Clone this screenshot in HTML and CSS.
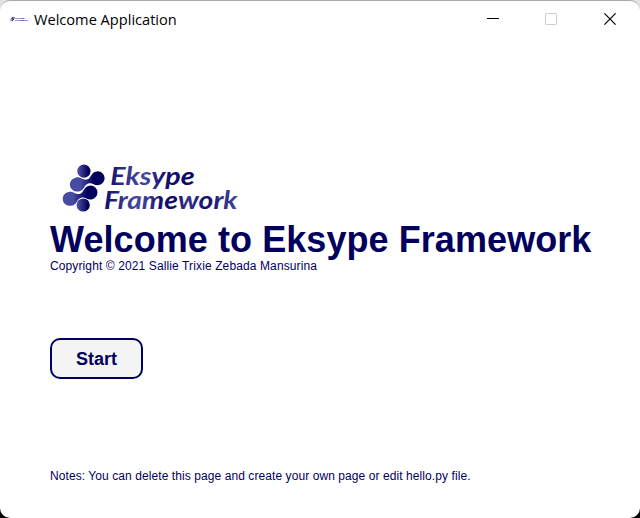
FILE: index.html
```html
<!DOCTYPE html>
<html lang="en">
<head>
<meta charset="utf-8">
<title>Welcome Application</title>
<link rel="stylesheet" href="styles.css">
</head>
<body>
<div class="window">
  <header class="titlebar">
    <svg class="app-icon" viewBox="10 0 168 62" preserveAspectRatio="none" aria-hidden="true"><use href="#brand"/></svg>
    <span class="title">Welcome Application</span>
    <div class="controls">
      <svg viewBox="0 0 12 12"><path d="M0 5.5H12" stroke="#000"/></svg>
      <svg class="maximize" viewBox="0 0 12 12"><rect x=".5" y=".5" width="11" height="11" rx=".7" fill="none" stroke="#ccc"/></svg>
      <svg viewBox="0 0 12 12"><path d="M.4 .4L11.6 11.6M11.6 .4L.4 11.6" stroke="#000" stroke-width="1.2"/></svg>
    </div>
  </header>
  <main>
    <svg class="logo" viewBox="0 0 186 62" role="img" aria-label="Eksype Framework">
      <defs>
        <linearGradient id="ball"><stop offset=".1" stop-color="#484ba2"/><stop offset=".85" stop-color="#02005c"/></linearGradient>
        <linearGradient id="pair"><stop offset=".3" stop-color="#484ba2"/><stop offset=".7" stop-color="#02005c"/></linearGradient>
        <linearGradient id="top"><stop offset="0" stop-color="#16146a"/><stop offset=".2" stop-color="#34358c"/><stop offset=".42" stop-color="#4649a0"/><stop offset=".62" stop-color="#15136b"/><stop offset="1" stop-color="#08065f"/></linearGradient>
        <linearGradient id="bottom"><stop offset="0" stop-color="#100e67"/><stop offset=".17" stop-color="#3a3c94"/><stop offset=".27" stop-color="#4649a0"/><stop offset=".42" stop-color="#15136b"/><stop offset=".52" stop-color="#0a0862"/><stop offset=".62" stop-color="#34368f"/><stop offset=".76" stop-color="#12106a"/><stop offset="1" stop-color="#4649a0"/></linearGradient>
      </defs>
      <g id="brand">
        <circle cx="33.9" cy="13.2" r="6.6" fill="url(#ball)"/>
        <path id="link" d="M25.6 19.7C30.2 18.2 32.3 22.4 36.9 21.6C41.5 20.6 40.5 13.4 47.9 13.2A7 7 0 0 1 48.8 27.1C44 27.7 42.3 24.2 38.3 25.4C33.5 26.9 34.5 33.1 28 33.4A6.9 6.9 0 0 1 25.6 19.7Z" fill="url(#pair)"/>
        <use href="#link" x="-7.2" y="14.3"/>
        <circle cx="33.2" cy="47" r="6.6" fill="url(#ball)"/>
        <g class="wordmark">
          <text x="60.2" y="27.3" textLength="84.5" lengthAdjust="spacingAndGlyphs" fill="url(#top)">Eksype</text>
          <text x="54" y="51" textLength="133.5" lengthAdjust="spacingAndGlyphs" fill="url(#bottom)">Framework</text>
        </g>
      </g>
    </svg>
    <h1>Welcome to Eksype Framework</h1>
    <p class="copyright">Copyright © 2021 Sallie Trixie Zebada Mansurina</p>
    <button class="start">Start</button>
    <p class="notes">Notes: You can delete this page and create your own page or edit hello.py file.</p>
  </main>
</div>
</body>
</html>
```
FILE: styles.css
```css
* { box-sizing: border-box; }
html { background: linear-gradient(#e3e3e3 50%, #000 50%); }
body { margin: 0; height: 518px; overflow: hidden; }
.window { height: 518px; background: #fff; border-top: 1px solid #aaa; border-radius: 10px; color: #02005c; font-family: "Liberation Sans", Arial, sans-serif; }
.titlebar { height: 36px; display: flex; align-items: center; padding-left: 10px; }
.app-icon { width: 18px; height: 6px; flex: none; }
.title { margin-left: 6px; color: #000; font: 14.6px "Open Sans", sans-serif; white-space: nowrap; }
.controls { display: flex; gap: 46px; margin-left: auto; padding-right: 24px; }
.controls svg { display: block; width: 12px; height: 12px; }
.controls .maximize { margin-right: 1px; }
main { padding: 121px 0 0 50px; }
.logo { display: block; width: 186px; height: 62px; overflow: visible; }
.wordmark { font: italic bold 24px Lato, sans-serif; }
h1 { margin: 0; font-size: 36px; letter-spacing: .07px; line-height: 39px; white-space: nowrap; }
.copyright, .notes { margin: 0; font-size: 12px; letter-spacing: .115px; line-height: 14px; white-space: nowrap; }
.start { display: block; width: 93px; height: 41px; margin: 65px 0 90px; padding: 2px 0 0; border: 2px solid #02005c; border-radius: 10px; background: #f4f4f4; color: #02005c; font: bold 18px "Liberation Sans", Arial, sans-serif; }
.notes { letter-spacing: .08px; }
```
